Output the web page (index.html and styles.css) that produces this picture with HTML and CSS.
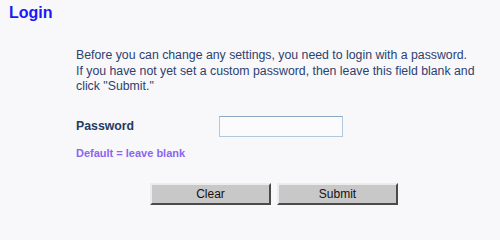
FILE: index.html
```html
<!DOCTYPE html>
<html>
<head>
<meta charset="utf-8">
<link rel="stylesheet" href="styles.css">
</head>
<body>
<div class="page">
  <h1 class="title">Login</h1>
  <div class="content">
    <p class="intro">Before you can change any settings, you need to login with a password.<br>If you have not yet set a custom password, then leave this field blank and<br>click "Submit."</p>
    <div class="field-row">
      <label class="label" for="pw">Password</label>
      <input class="input" id="pw" type="password">
    </div>
    <div class="hint">Default = leave blank</div>
  </div>
  <div class="buttons">
    <button class="btn" type="button">Clear</button>
    <button class="btn" type="button">Submit</button>
  </div>
</div>
</body>
</html>
```

FILE: styles.css
```css
html, body {
  margin: 0;
  padding: 0;
  background: #f8f8fa;
  font-family: "Liberation Sans", Arial, sans-serif;
}
.page {
  width: 500px;
  height: 219px;
  box-sizing: border-box;
  padding: 4px 0 0 9px;
  overflow: hidden;
}
.title {
  margin: 0;
  font-size: 16px;
  line-height: 18px;
  font-weight: bold;
  color: #1a1af5;
}
.content {
  padding-left: 67px;
}
.intro {
  margin: 26px 0 0 0;
  font-size: 12.3px;
  line-height: 15.5px;
  color: #2d4170;
}
.field-row {
  display: flex;
  align-items: center;
  margin-top: 21px;
}
.label {
  width: 143px;
  font-size: 12.3px;
  font-weight: bold;
  color: #263a63;
}
.input {
  width: 124px;
  height: 21px;
  box-sizing: border-box;
  border: 1px solid #b4c8dc;
  border-top-color: #8ea9c6;
  background: #fbfbfd;
  margin: 0;
  padding: 0;
}
.hint {
  margin-top: 10px;
  font-size: 11px;
  font-weight: bold;
  color: #8a66f0;
}
.buttons {
  display: flex;
  gap: 6px;
  margin: 24px 0 0 141px;
}
.btn {
  width: 121px;
  height: 22px;
  margin: 0;
  padding: 0;
  box-sizing: border-box;
  background: #c8c8c8;
  border: 2px solid;
  border-color: #ececec #4a4a4a #4a4a4a #ececec;
  font-family: "Liberation Sans", Arial, sans-serif;
  font-size: 12px;
  color: #111;
}
```
